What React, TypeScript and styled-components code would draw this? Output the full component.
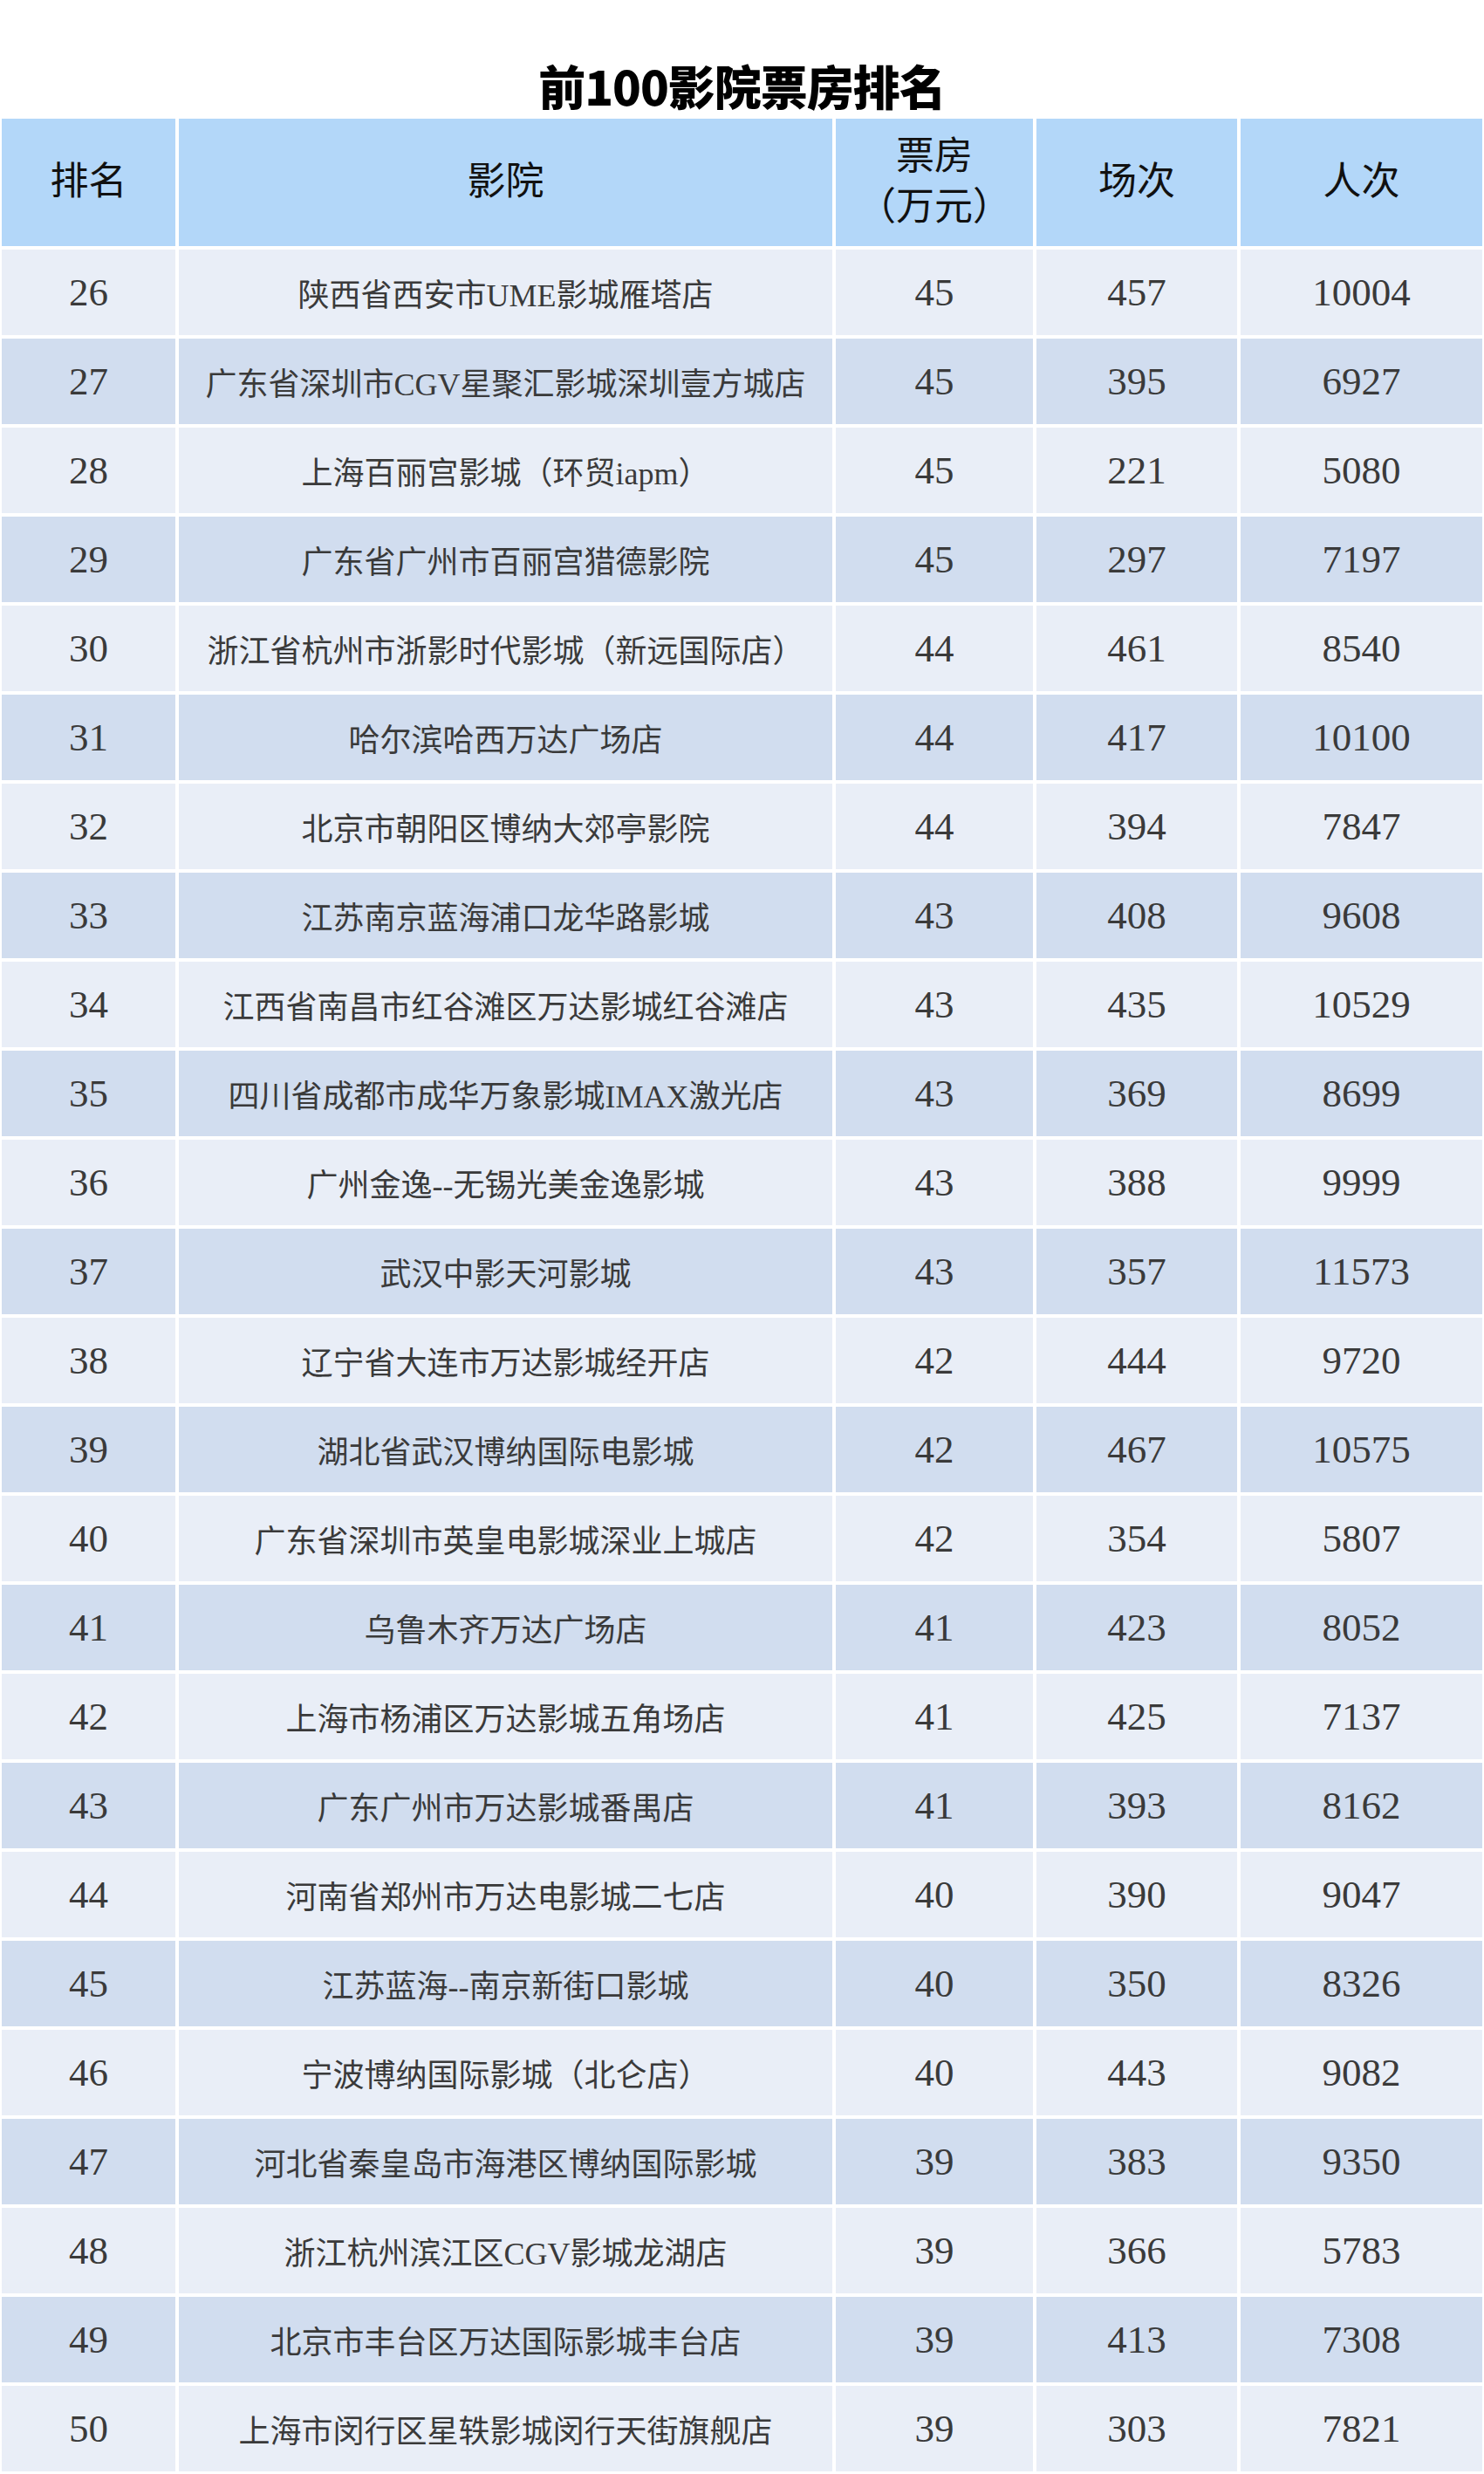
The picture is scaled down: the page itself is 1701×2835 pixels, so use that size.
import styled, { createGlobalStyle } from 'styled-components';

const GlobalStyle = createGlobalStyle`
	html, body {
		margin: 0;
		padding: 0;
		background: #ffffff;
	}
`;

interface ICinema {
	rank: number;
	name: string;
	boxOffice: number;
	shows: number;
	viewers: number;
}

const cinemas: ICinema[] = [
	{ rank: 26, name: '陕西省西安市UME影城雁塔店', boxOffice: 45, shows: 457, viewers: 10004 },
	{ rank: 27, name: '广东省深圳市CGV星聚汇影城深圳壹方城店', boxOffice: 45, shows: 395, viewers: 6927 },
	{ rank: 28, name: '上海百丽宫影城（环贸iapm）', boxOffice: 45, shows: 221, viewers: 5080 },
	{ rank: 29, name: '广东省广州市百丽宫猎德影院', boxOffice: 45, shows: 297, viewers: 7197 },
	{ rank: 30, name: '浙江省杭州市浙影时代影城（新远国际店）', boxOffice: 44, shows: 461, viewers: 8540 },
	{ rank: 31, name: '哈尔滨哈西万达广场店', boxOffice: 44, shows: 417, viewers: 10100 },
	{ rank: 32, name: '北京市朝阳区博纳大郊亭影院', boxOffice: 44, shows: 394, viewers: 7847 },
	{ rank: 33, name: '江苏南京蓝海浦口龙华路影城', boxOffice: 43, shows: 408, viewers: 9608 },
	{ rank: 34, name: '江西省南昌市红谷滩区万达影城红谷滩店', boxOffice: 43, shows: 435, viewers: 10529 },
	{ rank: 35, name: '四川省成都市成华万象影城IMAX激光店', boxOffice: 43, shows: 369, viewers: 8699 },
	{ rank: 36, name: '广州金逸--无锡光美金逸影城', boxOffice: 43, shows: 388, viewers: 9999 },
	{ rank: 37, name: '武汉中影天河影城', boxOffice: 43, shows: 357, viewers: 11573 },
	{ rank: 38, name: '辽宁省大连市万达影城经开店', boxOffice: 42, shows: 444, viewers: 9720 },
	{ rank: 39, name: '湖北省武汉博纳国际电影城', boxOffice: 42, shows: 467, viewers: 10575 },
	{ rank: 40, name: '广东省深圳市英皇电影城深业上城店', boxOffice: 42, shows: 354, viewers: 5807 },
	{ rank: 41, name: '乌鲁木齐万达广场店', boxOffice: 41, shows: 423, viewers: 8052 },
	{ rank: 42, name: '上海市杨浦区万达影城五角场店', boxOffice: 41, shows: 425, viewers: 7137 },
	{ rank: 43, name: '广东广州市万达影城番禺店', boxOffice: 41, shows: 393, viewers: 8162 },
	{ rank: 44, name: '河南省郑州市万达电影城二七店', boxOffice: 40, shows: 390, viewers: 9047 },
	{ rank: 45, name: '江苏蓝海--南京新街口影城', boxOffice: 40, shows: 350, viewers: 8326 },
	{ rank: 46, name: '宁波博纳国际影城（北仑店）', boxOffice: 40, shows: 443, viewers: 9082 },
	{ rank: 47, name: '河北省秦皇岛市海港区博纳国际影城', boxOffice: 39, shows: 383, viewers: 9350 },
	{ rank: 48, name: '浙江杭州滨江区CGV影城龙湖店', boxOffice: 39, shows: 366, viewers: 5783 },
	{ rank: 49, name: '北京市丰台区万达国际影城丰台店', boxOffice: 39, shows: 413, viewers: 7308 },
	{ rank: 50, name: '上海市闵行区星轶影城闵行天街旗舰店', boxOffice: 39, shows: 303, viewers: 7821 },
];

const App = () => {
	return (
		<>
			<GlobalStyle />
			<Page>
				<Title>前100影院票房排名</Title>
				<Table>
					<HeadRow>
						<HeadCell>排名</HeadCell>
						<HeadCell>影院</HeadCell>
						<HeadCell>
							票房
							<br />
							（万元）
						</HeadCell>
						<HeadCell>场次</HeadCell>
						<HeadCell>人次</HeadCell>
					</HeadRow>
					{cinemas.map((item, i) => {
						const { rank, name, boxOffice, shows, viewers } = item;
						const dark = i % 2 === 1;
						return (
							<Row key={rank}>
								<Cell $dark={dark}>{rank}</Cell>
								<NameCell $dark={dark}>{name}</NameCell>
								<Cell $dark={dark}>{boxOffice}</Cell>
								<Cell $dark={dark}>{shows}</Cell>
								<Cell $dark={dark}>{viewers}</Cell>
							</Row>
						);
					})}
				</Table>
			</Page>
		</>
	);
};

const Page = styled.main`
	width: 1701px;
	background: #ffffff;
`;

const Title = styled.h1`
	margin: 0;
	height: 136px;
	box-sizing: border-box;
	padding-top: 68px;
	text-align: center;
	font-family: 'Noto Sans CJK SC', 'Noto Sans', sans-serif;
	font-weight: 900;
	font-size: 54px;
	line-height: 60px;
	color: #000000;
	letter-spacing: -1px;
`;

const Table = styled.div`
	display: flex;
	flex-direction: column;
	gap: 4px;
	padding: 0 2px;
`;

const Row = styled.div`
	display: grid;
	grid-template-columns: 199px 749px 226px 230px 1fr;
	gap: 4px;
	height: 98px;
`;

const HeadRow = styled(Row)`
	height: 146px;
`;

const HeadCell = styled.div`
	display: flex;
	align-items: center;
	justify-content: center;
	text-align: center;
	background: #b3d7f9;
	font-family: 'Liberation Serif', 'Noto Sans CJK SC', serif;
	font-size: 44px;
	line-height: 58px;
	color: #111111;
`;

const Cell = styled.div<{ $dark: boolean }>`
	display: flex;
	align-items: center;
	justify-content: center;
	background: ${(p) => (p.$dark ? '#d1ddef' : '#e9eef7')};
	font-family: 'Liberation Serif', 'Noto Sans CJK SC', serif;
	font-size: 45px;
	color: #3a3a3a;
`;

const NameCell = styled(Cell)`
	font-size: 36px;
	white-space: nowrap;
`;

export default App;
